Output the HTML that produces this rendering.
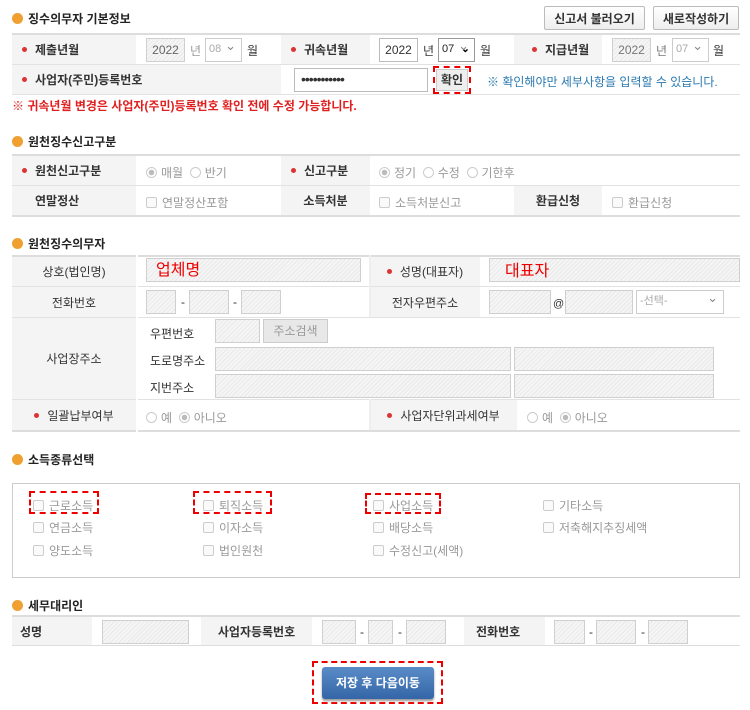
<!DOCTYPE html>
<html><head><meta charset="utf-8"><style>
*{box-sizing:border-box;margin:0;padding:0}
body{width:750px;height:710px;background:#fff;font-family:"Liberation Sans","Noto Sans CJK KR","NanumGothic",sans-serif;font-size:12px;color:#333;position:relative;overflow:hidden}
.a{position:absolute}
.t{font-weight:bold;font-size:12px;color:#222;white-space:nowrap}
.ic{width:11px;height:11px;border-radius:50%;background:#f0a030;display:inline-block;vertical-align:-1px;margin-right:5px}
.lb{background:#f4f4f4;display:flex;align-items:center;justify-content:center;font-weight:bold;color:#333;white-space:nowrap}
.lp{justify-content:flex-start;padding-left:10px}
.line{background:#e2e2e2;height:1px}
.hl{background:#ddd;height:2px}
.in{border:1px solid #cfcfcf;background:repeating-linear-gradient(135deg,#f5f5f5 0 2px,#e9e9e9 2px 3px)}
.inw{border:1px solid #bbb;background:#fff}
.sel{border:1px solid #ccc;background:#fff;color:#aaa;padding-left:3px;line-height:21px;font-size:11px}
.sel:after{content:"⌄";position:absolute;right:5px;top:-4px;color:#888;font-size:13px}
.g{color:#999;white-space:nowrap}
.st{display:inline-block;width:5px;height:5px;border-radius:50%;background:#d33;margin-right:8px;vertical-align:2px}
.rd{display:inline-block;width:11px;height:11px;border:1px solid #ccc;border-radius:50%;vertical-align:-1px;margin-right:4px;background:#fff}
.rd.on{background:radial-gradient(#bbb 0 2.5px,#fff 3px)}
.cb{display:inline-block;width:11px;height:11px;border:1px solid #ccc;border-radius:2px;vertical-align:-1px;margin-right:5px;background:#fafafa}
.dash{border:2px dashed #e00}
.btn{border:1px solid #bbb;background:linear-gradient(#fff,#eee);font-weight:bold;display:flex;align-items:center;justify-content:center;border-radius:2px;color:#333}
</style></head><body>

<!-- section 1 -->
<div class="a t" style="left:12px;top:10px"><span class="ic"></span>징수의무자 기본정보</div>
<div class="a btn" style="left:544px;top:6px;width:101px;height:24px">신고서 불러오기</div>
<div class="a btn" style="left:653px;top:6px;width:86px;height:24px">새로작성하기</div>
<div class="a hl" style="left:12px;top:33px;width:728px"></div>
<div class="a lb lp" style="left:12px;top:35px;width:124px;height:29px"><span class="st"></span>제출년월</div>
<div class="a lb lp" style="left:281px;top:35px;width:89px;height:29px"><span class="st"></span>귀속년월</div>
<div class="a lb lp" style="left:514px;top:35px;width:88px;height:29px;padding-left:18px"><span class="st"></span>지급년월</div>
<div class="a in g" style="left:146px;top:38px;width:39px;height:24px;line-height:22px;text-align:center;color:#666">2022</div>
<div class="a g" style="left:190px;top:42px;color:#999">년</div>
<div class="a sel" style="left:205px;top:38px;width:37px;height:24px">08</div>
<div class="a" style="left:247px;top:42px">월</div>
<div class="a inw" style="left:379px;top:38px;width:39px;height:24px;line-height:22px;text-align:center">2022</div>
<div class="a" style="left:423px;top:42px">년</div>
<div class="a sel" style="left:438px;top:38px;width:37px;height:24px;color:#222;border-color:#999">07<span class="a" style="right:4px;top:0;color:#000;font-weight:bold">⌄</span></div>
<div class="a" style="left:480px;top:42px">월</div>
<div class="a in" style="left:612px;top:38px;width:39px;height:24px;line-height:22px;text-align:center;color:#777">2022</div>
<div class="a" style="left:656px;top:42px;color:#777">년</div>
<div class="a sel" style="left:672px;top:38px;width:37px;height:24px">07</div>
<div class="a" style="left:713px;top:42px">월</div>
<div class="a line" style="left:12px;top:64px;width:728px"></div>
<div class="a lb lp" style="left:12px;top:65px;width:269px;height:29px"><span class="st"></span>사업자(주민)등록번호</div>
<div class="a inw" style="left:294px;top:68px;width:134px;height:24px;line-height:20px;padding-left:6px;font-size:14px;letter-spacing:-1px">•••••••••••</div>
<div class="a dash" style="left:433px;top:66px;width:38px;height:28px"></div>
<div class="a" style="left:436px;top:69px;width:32px;height:22px;background:#eee;border:1px solid #ccc;font-weight:bold;text-align:center;line-height:20px">확인</div>
<div class="a" style="left:487px;top:73px;color:#2a7ab0;white-space:nowrap">※ 확인해야만 세부사항을 입력할 수 있습니다.</div>
<div class="a line" style="left:12px;top:94px;width:728px"></div>
<div class="a" style="left:12px;top:97px;color:#e02020;font-weight:bold;white-space:nowrap">※ 귀속년월 변경은 사업자(주민)등록번호 확인 전에 수정 가능합니다.</div>

<!-- section 2 -->
<div class="a t" style="left:12px;top:133px"><span class="ic"></span>원천징수신고구분</div>
<div class="a hl" style="left:12px;top:154px;width:728px"></div>
<div class="a lb lp" style="left:12px;top:156px;width:124px;height:29px"><span class="st"></span>원천신고구분</div>
<div class="a g" style="left:146px;top:164px"><span class="rd on"></span>매월 &nbsp;<span class="rd"></span>반기</div>
<div class="a lb lp" style="left:281px;top:156px;width:89px;height:29px"><span class="st"></span>신고구분</div>
<div class="a g" style="left:379px;top:164px"><span class="rd on"></span>정기 &nbsp;<span class="rd"></span>수정 &nbsp;<span class="rd"></span>기한후</div>
<div class="a line" style="left:12px;top:185px;width:728px"></div>
<div class="a lb lp" style="left:12px;top:186px;width:124px;height:29px;padding-left:23px">연말정산</div>
<div class="a g" style="left:146px;top:194px"><span class="cb"></span>연말정산포함</div>
<div class="a lb" style="left:281px;top:186px;width:89px;height:29px">소득처분</div>
<div class="a g" style="left:379px;top:194px"><span class="cb"></span>소득처분신고</div>
<div class="a lb" style="left:514px;top:186px;width:88px;height:29px">환급신청</div>
<div class="a g" style="left:612px;top:194px"><span class="cb"></span>환급신청</div>
<div class="a hl" style="left:12px;top:215px;width:728px"></div>

<!-- section 3 -->
<div class="a t" style="left:12px;top:235px"><span class="ic"></span>원천징수의무자</div>
<div class="a hl" style="left:12px;top:255px;width:728px"></div>
<div class="a lb" style="left:12px;top:257px;width:124px;height:29px;font-weight:normal">상호(법인명)</div>
<div class="a in" style="left:146px;top:258px;width:215px;height:24px"></div>
<div class="a" style="left:156px;top:256px;color:#e00;font-size:16px">업체명</div>
<div class="a lb" style="left:370px;top:257px;width:110px;height:29px;font-weight:normal"><span class="st"></span>성명(대표자)</div>
<div class="a in" style="left:489px;top:258px;width:251px;height:24px"></div>
<div class="a" style="left:505px;top:257px;color:#e00;font-size:16px">대표자</div>
<div class="a line" style="left:12px;top:286px;width:728px"></div>
<div class="a lb" style="left:12px;top:287px;width:124px;height:30px;font-weight:normal">전화번호</div>
<div class="a in" style="left:146px;top:290px;width:30px;height:24px"></div>
<div class="a" style="left:181px;top:295px">-</div>
<div class="a in" style="left:189px;top:290px;width:40px;height:24px"></div>
<div class="a" style="left:233px;top:295px">-</div>
<div class="a in" style="left:241px;top:290px;width:40px;height:24px"></div>
<div class="a lb" style="left:370px;top:287px;width:110px;height:30px;font-weight:normal">전자우편주소</div>
<div class="a in" style="left:489px;top:290px;width:62px;height:24px"></div>
<div class="a" style="left:553px;top:298px;font-size:11px">@</div>
<div class="a in" style="left:565px;top:290px;width:68px;height:24px"></div>
<div class="a sel" style="left:636px;top:290px;width:88px;height:24px">-선택-</div>
<div class="a line" style="left:12px;top:317px;width:728px"></div>
<div class="a lb" style="left:12px;top:318px;width:124px;height:81px;font-weight:normal">사업장주소</div>
<div class="a" style="left:150px;top:325px">우편번호</div>
<div class="a in" style="left:215px;top:319px;width:45px;height:24px"></div>
<div class="a" style="left:263px;top:319px;width:65px;height:24px;background:#e8e8e8;border:1px solid #ccc;color:#999;text-align:center;line-height:22px">주소검색</div>
<div class="a" style="left:150px;top:352px">도로명주소</div>
<div class="a in" style="left:215px;top:347px;width:296px;height:24px"></div>
<div class="a in" style="left:514px;top:347px;width:200px;height:24px"></div>
<div class="a" style="left:150px;top:379px">지번주소</div>
<div class="a in" style="left:215px;top:374px;width:296px;height:24px"></div>
<div class="a in" style="left:514px;top:374px;width:200px;height:24px"></div>
<div class="a line" style="left:12px;top:399px;width:728px"></div>
<div class="a lb" style="left:12px;top:400px;width:124px;height:30px;font-weight:normal"><span class="st"></span>일괄납부여부</div>
<div class="a g" style="left:146px;top:409px"><span class="rd"></span>예 &nbsp;<span class="rd on"></span>아니오</div>
<div class="a lb" style="left:370px;top:400px;width:147px;height:30px;font-weight:normal"><span class="st"></span>사업자단위과세여부</div>
<div class="a g" style="left:527px;top:409px"><span class="rd"></span>예 &nbsp;<span class="rd on"></span>아니오</div>
<div class="a hl" style="left:12px;top:430px;width:728px"></div>
<div class="a" style="left:136px;top:255px;width:2px;height:177px;background:#fff"></div>
<div class="a" style="left:369px;top:255px;width:2px;height:62px;background:#eee"></div>
<div class="a" style="left:369px;top:399px;width:2px;height:31px;background:#eee"></div>

<!-- section 4 -->
<div class="a t" style="left:12px;top:451px"><span class="ic"></span>소득종류선택</div>
<div class="a" style="left:12px;top:483px;width:728px;height:95px;border:1px solid #ccc"></div>
<div class="a dash" style="left:29px;top:491px;width:70px;height:23px"></div>
<div class="a dash" style="left:193px;top:491px;width:79px;height:23px"></div>
<div class="a dash" style="left:365px;top:493px;width:76px;height:21px"></div>
<div class="a g" style="left:33px;top:497px"><span class="cb"></span>근로소득</div>
<div class="a g" style="left:203px;top:497px"><span class="cb"></span>퇴직소득</div>
<div class="a g" style="left:373px;top:497px"><span class="cb"></span>사업소득</div>
<div class="a g" style="left:543px;top:497px"><span class="cb"></span>기타소득</div>
<div class="a g" style="left:33px;top:519px"><span class="cb"></span>연금소득</div>
<div class="a g" style="left:203px;top:519px"><span class="cb"></span>이자소득</div>
<div class="a g" style="left:373px;top:519px"><span class="cb"></span>배당소득</div>
<div class="a g" style="left:543px;top:519px"><span class="cb"></span>저축해지추징세액</div>
<div class="a g" style="left:33px;top:542px"><span class="cb"></span>양도소득</div>
<div class="a g" style="left:203px;top:542px"><span class="cb"></span>법인원천</div>
<div class="a g" style="left:373px;top:542px"><span class="cb"></span>수정신고(세액)</div>

<!-- section 5 -->
<div class="a t" style="left:12px;top:597px"><span class="ic"></span>세무대리인</div>
<div class="a hl" style="left:12px;top:615px;width:728px"></div>
<div class="a lb" style="left:12px;top:617px;width:80px;height:28px;justify-content:flex-start;padding-left:8px">성명</div>
<div class="a in" style="left:102px;top:620px;width:87px;height:24px"></div>
<div class="a lb" style="left:201px;top:617px;width:111px;height:28px">사업자등록번호</div>
<div class="a in" style="left:322px;top:620px;width:34px;height:24px"></div>
<div class="a" style="left:360px;top:625px">-</div>
<div class="a in" style="left:368px;top:620px;width:25px;height:24px"></div>
<div class="a" style="left:398px;top:625px">-</div>
<div class="a in" style="left:406px;top:620px;width:40px;height:24px"></div>
<div class="a lb" style="left:464px;top:617px;width:81px;height:28px;justify-content:flex-start;padding-left:12px">전화번호</div>
<div class="a in" style="left:554px;top:620px;width:31px;height:24px"></div>
<div class="a" style="left:589px;top:625px">-</div>
<div class="a in" style="left:596px;top:620px;width:40px;height:24px"></div>
<div class="a" style="left:641px;top:625px">-</div>
<div class="a in" style="left:648px;top:620px;width:40px;height:24px"></div>
<div class="a line" style="left:12px;top:645px;width:728px;background:#ddd"></div>

<div class="a dash" style="left:312px;top:661px;width:131px;height:43px"></div>
<div class="a" style="left:322px;top:667px;width:112px;height:32px;background:linear-gradient(#5a8cc8,#3466a8);border-radius:3px;color:#fff;font-weight:bold;text-align:center;line-height:32px;box-shadow:0 2px 2px #999">저장 후 다음이동</div>
</body></html>
